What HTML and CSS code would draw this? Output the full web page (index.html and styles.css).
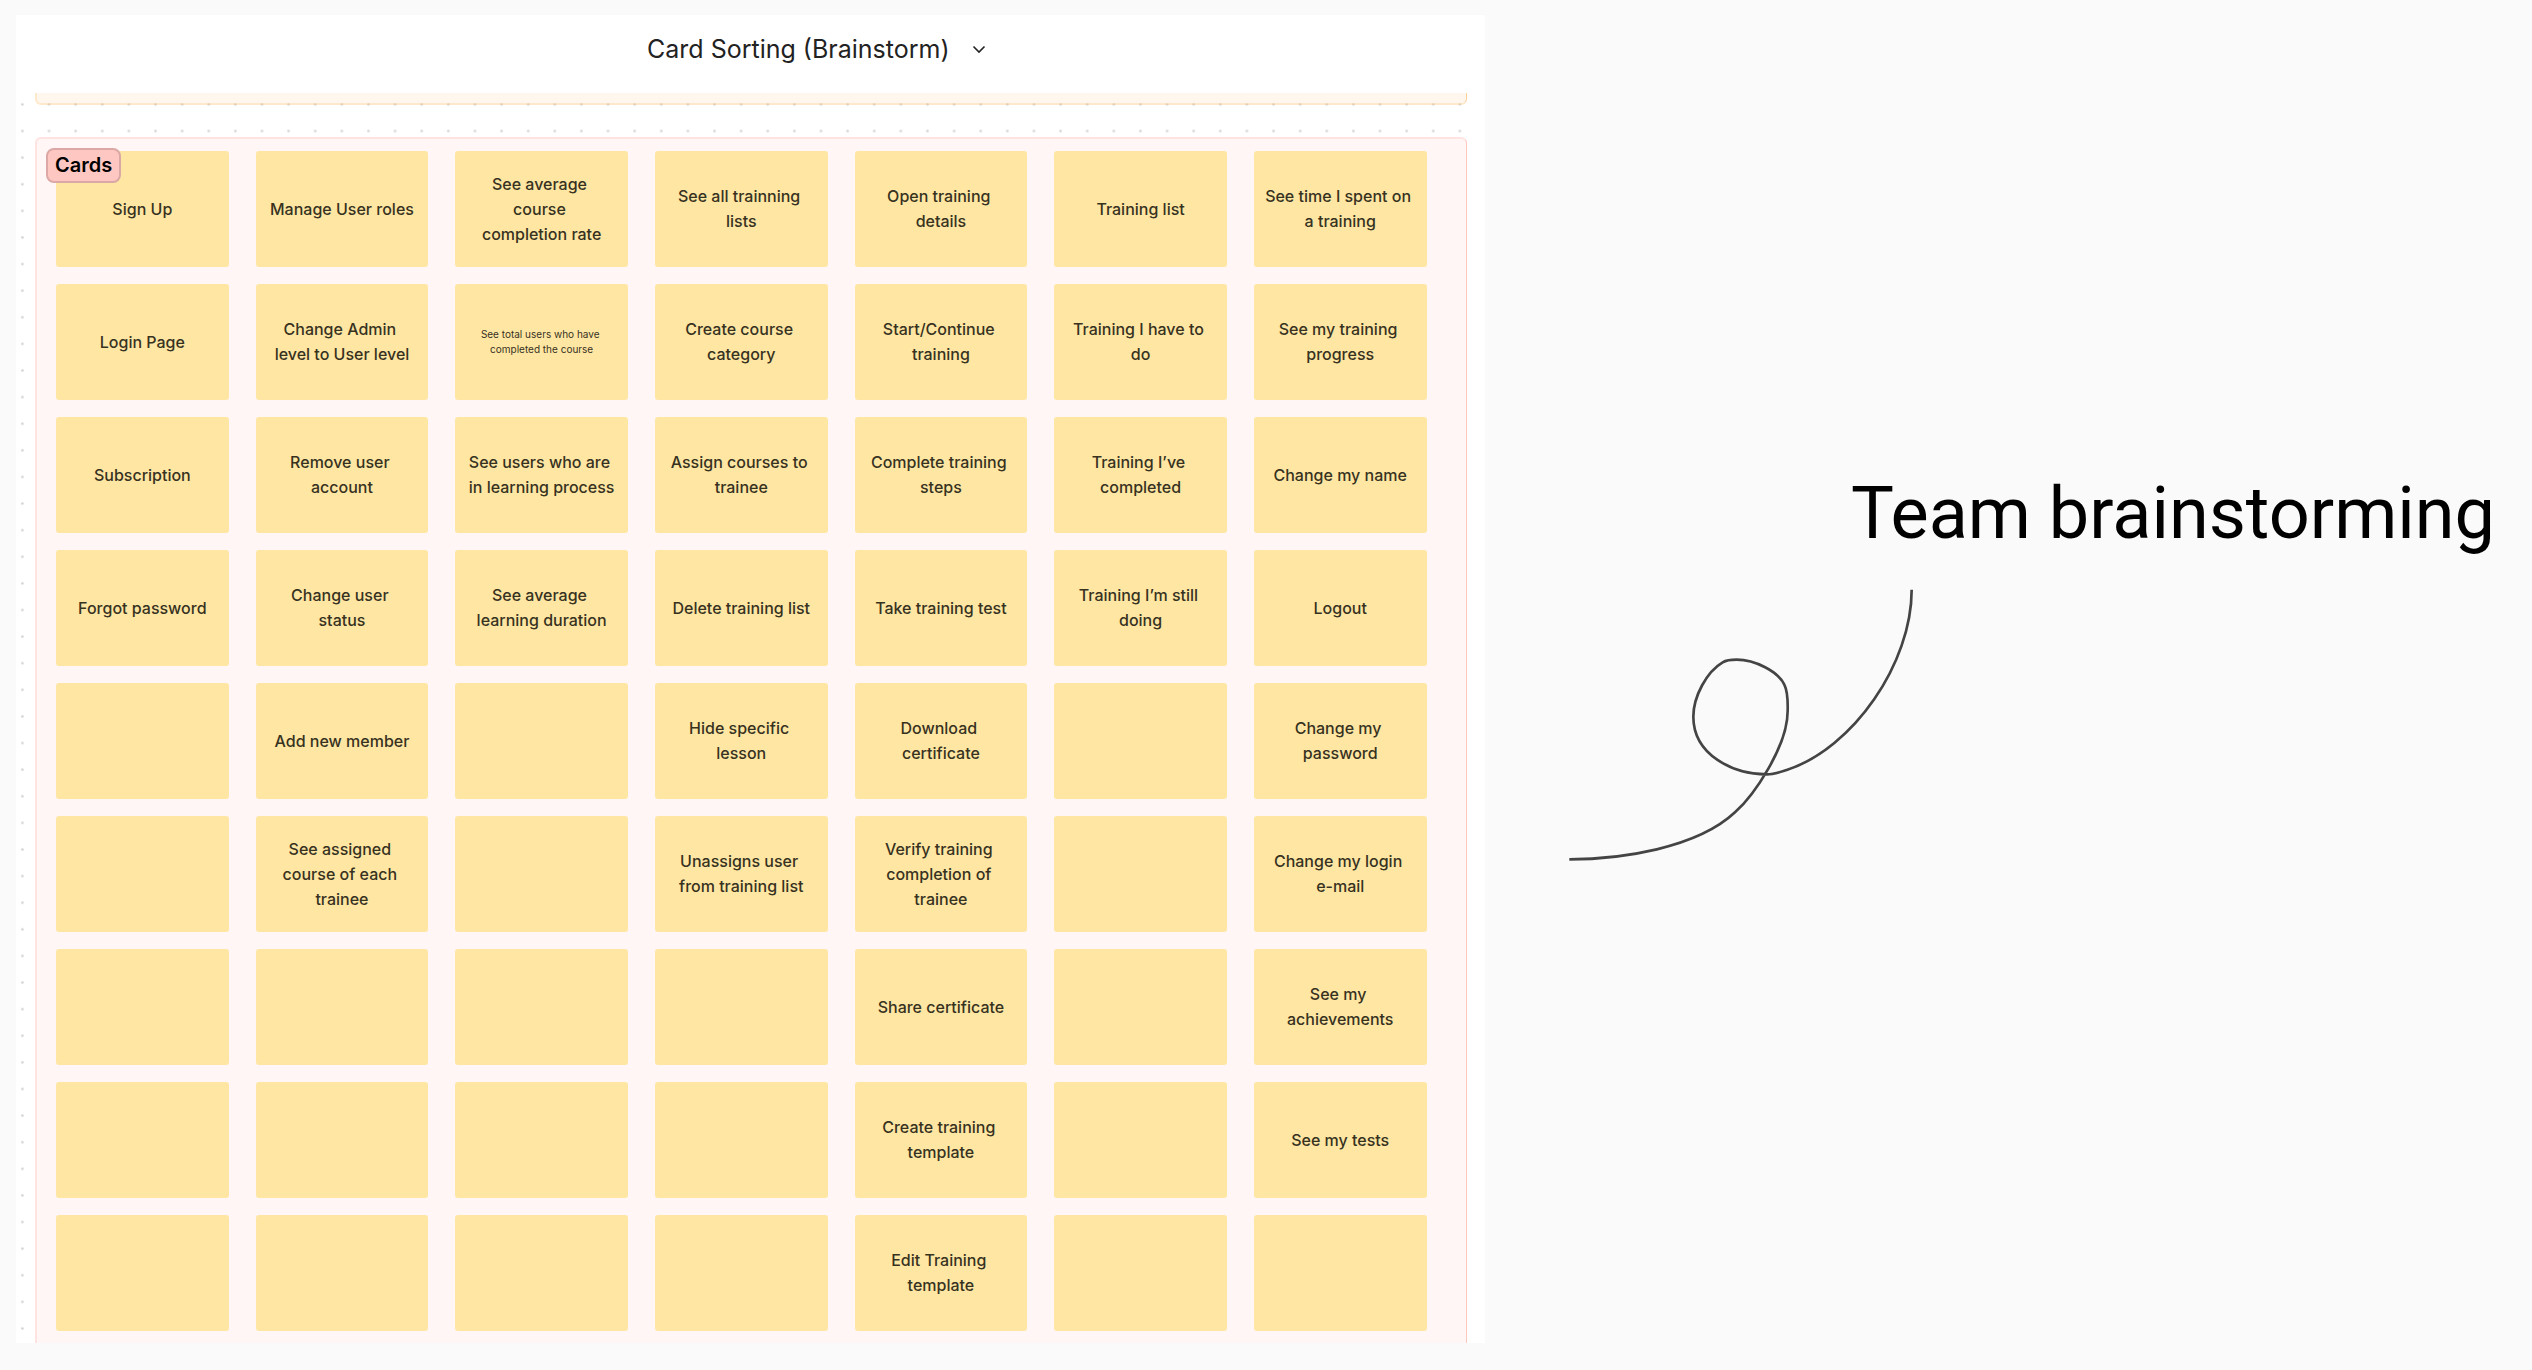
FILE: index.html
```html
<!DOCTYPE html>
<html lang="en">
<head>
<meta charset="utf-8">
<title>Team brainstorming</title>
<link rel="stylesheet" href="styles.css">
</head>
<body>
<main class="page">
  <section class="board">
    <header class="board-header">
      <button class="board-title" type="button">
        <span>Card Sorting (Brainstorm)</span>
        <svg class="chevron" viewBox="0 0 14 14" aria-hidden="true"><path d="M1.500 4.500l5.500 5.500 5.500-5.500"/></svg>
      </button>
    </header>
    <div class="canvas">
      <svg class="dots" aria-hidden="true">
        <defs>
          <pattern id="dot" x="-6.900" y="-1.900" width="26.620" height="26.610" patternUnits="userSpaceOnUse">
            <circle cx="13.310" cy="13.300" r="1.300"/>
          </pattern>
        </defs>
        <rect width="100%" height="100%" fill="url(#dot)"/>
      </svg>
      <div class="frame-above"></div>
      <section class="frame">
        <h2 class="frame-label">Cards</h2>
        <div class="cards">
          <p class="card">Sign Up</p>
          <p class="card">Manage User roles</p>
          <p class="card"><span>See average <br>course <br>completion rate</span></p>
          <p class="card">See all trainning lists</p>
          <p class="card">Open training details</p>
          <p class="card">Training list</p>
          <p class="card">See time I spent on a training</p>

          <p class="card">Login Page</p>
          <p class="card">Change Admin level to User level</p>
          <p class="card card-small">See total users who have completed the course</p>
          <p class="card">Create course category</p>
          <p class="card">Start/Continue training</p>
          <p class="card">Training I have to do</p>
          <p class="card">See my training progress</p>

          <p class="card">Subscription</p>
          <p class="card">Remove user account</p>
          <p class="card">See users who are in learning process</p>
          <p class="card">Assign courses to trainee</p>
          <p class="card">Complete training steps</p>
          <p class="card">Training I’ve completed</p>
          <p class="card">Change my name</p>

          <p class="card">Forgot password</p>
          <p class="card"><span>Change user <br>status</span></p>
          <p class="card">See average learning duration</p>
          <p class="card">Delete training list</p>
          <p class="card">Take training test</p>
          <p class="card">Training I’m still doing</p>
          <p class="card">Logout</p>

          <p class="card"></p>
          <p class="card">Add new member</p>
          <p class="card"></p>
          <p class="card">Hide specific lesson</p>
          <p class="card">Download certificate</p>
          <p class="card"></p>
          <p class="card">Change my password</p>

          <p class="card"></p>
          <p class="card">See assigned course of each trainee</p>
          <p class="card"></p>
          <p class="card">Unassigns user from training list</p>
          <p class="card">Verify training completion of trainee</p>
          <p class="card"></p>
          <p class="card"><span>Change my login <br>e-mail</span></p>

          <p class="card"></p>
          <p class="card"></p>
          <p class="card"></p>
          <p class="card"></p>
          <p class="card">Share certificate</p>
          <p class="card"></p>
          <p class="card">See my achievements</p>

          <p class="card"></p>
          <p class="card"></p>
          <p class="card"></p>
          <p class="card"></p>
          <p class="card">Create training template</p>
          <p class="card"></p>
          <p class="card">See my tests</p>

          <p class="card"></p>
          <p class="card"></p>
          <p class="card"></p>
          <p class="card"></p>
          <p class="card">Edit Training template</p>
          <p class="card"></p>
          <p class="card"></p>
        </div>
      </section>
    </div>
  </section>
  <aside class="note">
    <h1 class="note-title">Team brainstorming</h1>
    <svg class="note-arrow" viewBox="87 84 1038 822" aria-hidden="true">
      <path d="M88 898C240 898 470 865 585 757C640 708 743 560 743 452C744 410 740 388 733 374C715 335 645 299 590 299C572 299 560 300 548 307C500 335 460 410 460 470C460 585 580 643 680 643C702 643 715 638 740 630C940 565 1115 310 1115 89"/>
    </svg>
  </aside>
</main>
</body>
</html>
```
FILE: styles.css
```css
* {
  box-sizing: border-box;
}

body {
  margin: 0;
  background: #fafafa;
  font-family: Inter, "Liberation Sans", sans-serif;
}

.page {
  display: flex;
  align-items: flex-start;
  padding: 15px 0 27px 16px;
}

/* Board */
.board {
  flex: none;
  width: 58vw;
  background: #fff;
}

.board-header {
  display: flex;
  justify-content: center;
  padding: 14px 0 24px 132px;
}

.board-title {
  display: flex;
  align-items: center;
  gap: 22px;
  padding: 0;
  border: 0;
  background: none;
  color: #222;
  font-family: inherit;
  font-size: 25px;
  line-height: 40px;
}

.chevron {
  width: 14px;
  height: 14px;
  fill: none;
  stroke: #222;
  stroke-width: 1.6;
}

.canvas {
  position: relative;
  padding: 0 18px 0 19px;
}

.dots {
  position: absolute;
  inset: 0;
  width: 100%;
  height: 100%;
  fill: #d3d3d3;
}

.frame-above {
  position: relative;
  height: 12px;
  border: 2px solid rgba(255, 200, 130, 0.4);
  border-top: 0;
  border-right: 1px solid #fcd19c;
  border-radius: 0 0 6px 6px;
  background: rgba(255, 240, 220, 0.5);
  background-clip: padding-box;
}

.frame {
  position: relative;
  margin-top: 32px;
  padding: 12px 39px 12px 19px;
  border: 2px solid #ffe3e1;
  border-right: 1px solid #ffc7c2;
  border-bottom: 0;
  border-radius: 6px 6px 0 0;
  background: #fff6f5;
}

.frame-label {
  position: absolute;
  top: 9px;
  left: 9px;
  margin: 0;
  padding: 0 7px;
  border: 2px solid #dba8a5;
  border-radius: 8px;
  background: #ffc7c2;
  color: #000;
  font-size: 20px;
  font-weight: 600;
  line-height: 31px;
}

.cards {
  display: grid;
  grid-template-columns: repeat(7, 1fr);
  grid-auto-rows: minmax(116px, auto);
  gap: 17px 27px;
}

.card {
  display: grid;
  align-content: center;
  margin: 0;
  padding: 0 11px;
  border-radius: 3px;
  background: #ffe7a3;
  color: #37321f;
  font-size: 16px;
  font-weight: 500;
  line-height: 25px;
  text-align: center;
  white-space: break-spaces;
}

.card-small {
  font-size: 10px;
  font-weight: 400;
  line-height: 15px;
}

/* Annotation */
.note {
  display: flex;
  flex: 1;
  flex-direction: column;
  padding: 457px 37px 0 84px;
}

.note-title {
  align-self: flex-end;
  margin: 0;
  color: #000;
  font-family: Roboto, "Liberation Sans", sans-serif;
  font-size: 72px;
  font-weight: 400;
  line-height: 84px;
}

.note-arrow {
  width: 346px;
  height: 274px;
  margin-top: 32px;
  fill: none;
  stroke: #444;
  stroke-width: 8;
}
```
